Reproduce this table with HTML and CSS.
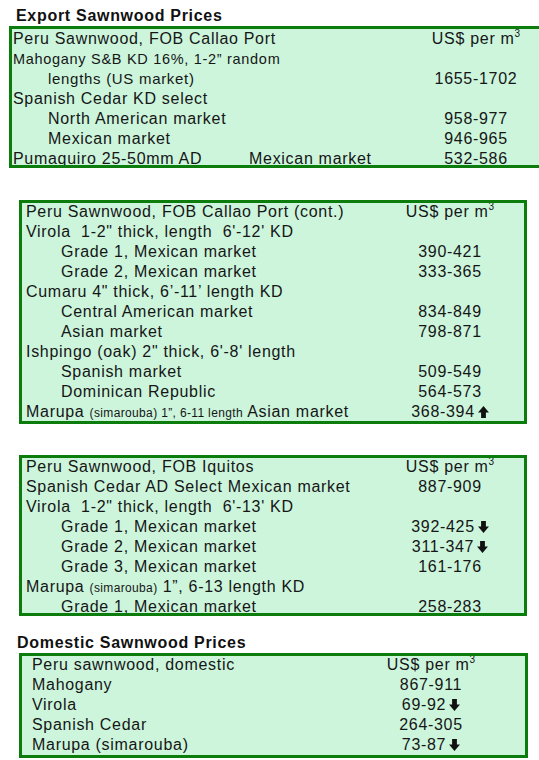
FILE: index.html
```html
<!DOCTYPE html>
<html lang="en">
<head>
<meta charset="utf-8">
<title>Sawnwood Prices</title>
<link rel="stylesheet" href="styles.css">
</head>
<body>
<div class="page">
  <h2 class="title title-export">Export Sawnwood Prices</h2>
  <div class="box box-1">
    <div class="rows">
      <div class="row"><span class="label">Peru Sawnwood, FOB Callao Port</span><span class="price">US$ per m<sup>3</sup></span></div>
      <div class="row"><span class="label small">Mahogany S&amp;B KD 16%, 1-2” random</span><span class="price"></span></div>
      <div class="row"><span class="label indent small2">lengths (US market)</span><span class="price">1655-1702</span></div>
      <div class="row"><span class="label">Spanish Cedar KD select</span><span class="price"></span></div>
      <div class="row"><span class="label indent">North American market</span><span class="price">958-977</span></div>
      <div class="row"><span class="label indent">Mexican market</span><span class="price">946-965</span></div>
      <div class="row"><span class="label split"><span class="split-a">Pumaquiro 25-50mm AD</span><span>Mexican market</span></span><span class="price">532-586</span></div>
    </div>
  </div>

  <div class="box box-2">
    <div class="rows">
      <div class="row"><span class="label">Peru Sawnwood, FOB Callao Port (cont.)</span><span class="price">US$ per m<sup>3</sup></span></div>
      <div class="row"><span class="label">Virola&nbsp; 1-2" thick, length&nbsp; 6'-12' KD</span><span class="price"></span></div>
      <div class="row"><span class="label indent">Grade 1, Mexican market</span><span class="price">390-421</span></div>
      <div class="row"><span class="label indent">Grade 2, Mexican market</span><span class="price">333-365</span></div>
      <div class="row"><span class="label">Cumaru 4" thick, 6’-11’ length KD</span><span class="price"></span></div>
      <div class="row"><span class="label indent">Central American market</span><span class="price">834-849</span></div>
      <div class="row"><span class="label indent">Asian market</span><span class="price">798-871</span></div>
      <div class="row"><span class="label">Ishpingo (oak) 2" thick, 6'-8' length</span><span class="price"></span></div>
      <div class="row"><span class="label indent">Spanish market</span><span class="price">509-549</span></div>
      <div class="row"><span class="label indent">Dominican Republic</span><span class="price">564-573</span></div>
      <div class="row"><span class="label">Marupa <span class="tiny">(simarouba) 1”, 6-11 length</span> Asian market</span><span class="price">368-394<svg class="arrow" viewBox="0 0 10 11" aria-hidden="true"><polygon points="5,0 10,6 7.2,6 7.2,11 2.8,11 2.8,6 0,6"/></svg></span></div>
    </div>
  </div>

  <div class="box box-3">
    <div class="rows">
      <div class="row"><span class="label">Peru Sawnwood, FOB Iquitos</span><span class="price">US$ per m<sup>3</sup></span></div>
      <div class="row"><span class="label">Spanish Cedar AD Select Mexican market</span><span class="price">887-909</span></div>
      <div class="row"><span class="label">Virola&nbsp; 1-2" thick, length&nbsp; 6'-13' KD</span><span class="price"></span></div>
      <div class="row"><span class="label indent">Grade 1, Mexican market</span><span class="price">392-425<svg class="arrow" viewBox="0 0 10 11" aria-hidden="true"><polygon points="2.8,0 7.2,0 7.2,5 10,5 5,11 0,5 2.8,5"/></svg></span></div>
      <div class="row"><span class="label indent">Grade 2, Mexican market</span><span class="price">311-347<svg class="arrow" viewBox="0 0 10 11" aria-hidden="true"><polygon points="2.8,0 7.2,0 7.2,5 10,5 5,11 0,5 2.8,5"/></svg></span></div>
      <div class="row"><span class="label indent">Grade 3, Mexican market</span><span class="price">161-176</span></div>
      <div class="row"><span class="label">Marupa <span class="tiny">(simarouba)</span> 1”, 6-13 length KD</span><span class="price"></span></div>
      <div class="row"><span class="label indent">Grade 1, Mexican market</span><span class="price">258-283</span></div>
    </div>
  </div>

  <h2 class="title title-domestic">Domestic Sawnwood Prices</h2>
  <div class="box box-4">
    <div class="rows">
      <div class="row"><span class="label">Peru sawnwood, domestic</span><span class="price">US$ per m<sup>3</sup></span></div>
      <div class="row"><span class="label">Mahogany</span><span class="price">867-911</span></div>
      <div class="row"><span class="label">Virola</span><span class="price">69-92<svg class="arrow" viewBox="0 0 10 11" aria-hidden="true"><polygon points="2.8,0 7.2,0 7.2,5 10,5 5,11 0,5 2.8,5"/></svg></span></div>
      <div class="row"><span class="label">Spanish Cedar</span><span class="price">264-305</span></div>
      <div class="row"><span class="label">Marupa (simarouba)</span><span class="price">73-87<svg class="arrow" viewBox="0 0 10 11" aria-hidden="true"><polygon points="2.8,0 7.2,0 7.2,5 10,5 5,11 0,5 2.8,5"/></svg></span></div>
    </div>
  </div>
</div>
</body>
</html>
```

FILE: styles.css
```css
html, body {
  margin: 0;
  padding: 0;
  background: #ffffff;
}

body {
  font-family: "Liberation Sans", Arial, sans-serif;
  color: #161616;
  font-size: 16px;
  letter-spacing: 0.7px;
}

.page {
  width: 539px;
  height: 760px;
  overflow: hidden;
}

.title {
  margin: 0;
  font-size: 16px;
  font-weight: bold;
  line-height: 20px;
  color: #111111;
}

.title-export {
  margin-top: 6px;
  margin-left: 16px;
}

.title-domestic {
  margin-top: 17px;
  margin-left: 17px;
}

.box {
  border: 3px solid #0c7c0c;
  background: #ccf5dc;
  overflow: hidden;
  box-sizing: content-box;
}

.rows {
  display: flex;
  flex-direction: column;
}

.row {
  display: grid;
  grid-template-columns: 1fr 120px;
  height: 20px;
  line-height: 20px;
  white-space: nowrap;
}

.price {
  text-align: center;
}

.indent {
  padding-left: 35px;
}

.small {
  font-size: 14.5px;
}

.small2 {
  font-size: 15px;
}

.tiny {
  font-size: 12px;
  letter-spacing: 0.35px;
}

.split {
  display: flex;
}

.split-a {
  width: 236px;
}

sup {
  font-size: 10px;
  line-height: 0;
  vertical-align: 7px;
  letter-spacing: 0;
}

.arrow {
  width: 11px;
  height: 12px;
  margin-left: 3px;
  vertical-align: -1px;
  fill: #111111;
}

/* box geometry */
.box-1 {
  margin-left: 9px;
  width: 523px;
  height: 136px;
  padding: 0 15px 0 1px;
}

.box-2 {
  margin-top: 32px;
  margin-left: 19px;
  width: 484px;
  height: 218px;
  padding: 0 14px 0 4px;
}

.box-2 .rows {
  margin-top: -1px;
}

.box-3 {
  margin-top: 31px;
  margin-left: 19px;
  width: 484px;
  height: 155px;
  padding: 0 14px 0 4px;
}

.box-3 .rows {
  margin-top: -1px;
}

.box-4 {
  margin-left: 19px;
  width: 459px;
  height: 99px;
  padding: 0 34px 0 10px;
}

.box-4 .rows {
  margin-top: -1px;
}
```
